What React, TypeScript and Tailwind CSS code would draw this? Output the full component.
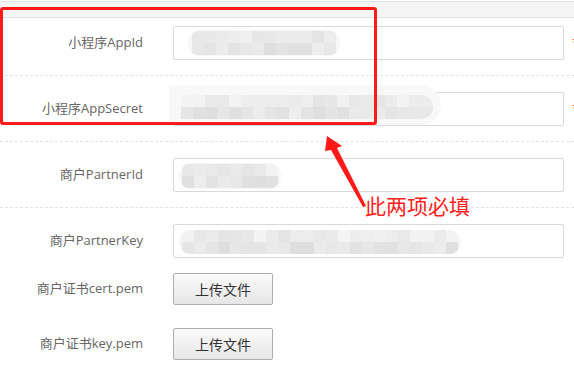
import React from "react";

const font = "font-['Open_Sans','Noto_Sans_CJK_SC',sans-serif]";

// deterministic grey for mosaic cells, lower rows a touch darker
const grey = (i: number, r: number, seed: number) => {
  const v = Math.abs(Math.sin(i * 12.9898 + seed * 78.233) * 43758.5453) % 1;
  const c = Math.round(236 - r * 6 + (v - 0.5) * 16);
  return `rgb(${c},${c},${c})`;
};

const Mosaic = ({ cols, rows, seed, cell = 12 }: { cols: number; rows: number; seed: number; cell?: number }) => (
  <div className="flex flex-col">
    {Array.from({ length: rows }).map((_, r) => (
      <div key={r} className="flex">
        {Array.from({ length: cols }).map((_, c) => (
          <div
            key={c}
            style={{ width: cell, height: cell, backgroundColor: grey(r * cols + c, r, seed) }}
          />
        ))}
      </div>
    ))}
  </div>
);

const Label = ({ children }: { children: React.ReactNode }) => (
  <div className="w-[143px] shrink-0 text-right text-[13px] text-[#666]">{children}</div>
);

const Input = ({ children }: { children?: React.ReactNode }) => (
  <div className="relative ml-[30px] h-[34px] w-[391px] shrink-0 rounded-[2px] border border-[#d9d9d9] bg-white">
    {children}
  </div>
);

const Star = () => <span className="ml-[8px] text-[12px] leading-none text-[#f0542d]">*</span>;

const UploadButton = () => (
  <button className="ml-[30px] h-[32px] w-[100px] rounded-[2px] border border-[#adadad] bg-gradient-to-b from-[#fbfbfb] to-[#e6e6e6] text-[14px] text-[#333]">
    上传文件
  </button>
);

export default function App() {
  return (
    <div className={`relative h-[381px] w-[574px] overflow-hidden bg-white ${font}`}>
      <div className="mt-px h-[17px] border-y border-[#e3e3e3] bg-[#f5f5f5]" />

      <div className="flex items-center border-b border-dashed border-[#e3e3e3] pt-[8px] pb-[15px]">
        <Label>小程序AppId</Label>
        <Input>
          <div className="absolute left-[14px] top-[3px] overflow-hidden rounded-full bg-[#f7f7f7] px-[4px] py-px">
            <Mosaic cols={12} rows={2} seed={1} />
          </div>
        </Input>
        <Star />
      </div>

      <div className="flex items-center border-b border-dashed border-[#e3e3e3] pt-[16px] pb-[15px]">
        <Label>小程序AppSecret</Label>
        <Input>
          <div className="absolute left-[-5px] top-[-8px] h-[40px] w-[272px] overflow-hidden rounded-r-full rounded-l-[14px] bg-[#f8f8f8] pl-[12px] pt-[10px]">
            <div className="w-[252px] overflow-hidden rounded-r-full">
              <Mosaic cols={21} rows={2} seed={2} />
            </div>
          </div>
        </Input>
        <Star />
      </div>

      <div className="flex items-center border-b border-dashed border-[#e3e3e3] pt-[16px] pb-[15px]">
        <Label>商户PartnerId</Label>
        <Input>
          <div className="absolute left-[5px] top-[4px] overflow-hidden rounded-full bg-[#f6f6f6] px-[3px] py-px">
            <Mosaic cols={8} rows={2} seed={3} />
          </div>
        </Input>
      </div>

      <div className="flex items-center pt-[16px] pb-[15px]">
        <Label>商户PartnerKey</Label>
        <Input>
          <div className="absolute left-[5px] top-[5px] overflow-hidden rounded-full bg-[#f6f6f6] px-[3px]">
            <Mosaic cols={23} rows={2} seed={4} />
          </div>
        </Input>
      </div>

      <div className="flex items-center pb-[23px]">
        <Label>商户证书cert.pem</Label>
        <UploadButton />
      </div>

      <div className="flex items-center">
        <Label>商户证书key.pem</Label>
        <UploadButton />
      </div>

      {/* annotation overlay */}
      <div className="pointer-events-none absolute left-0 top-[7px] h-[118px] w-[377px] rounded-[3px] border-[3px] border-[#ff1a1a]" />
      <svg className="pointer-events-none absolute left-0 top-0" width="574" height="381">
        <polygon
          points="327,136 342,146 337,148 366,206 363,207 331,150 325,151"
          fill="#ff1a1a"
        />
      </svg>
      <div className="pointer-events-none absolute left-[365px] top-[195px] font-['Noto_Sans_CJK_SC',sans-serif] text-[21px] leading-none text-[#ff2020]">
        此两项必填
      </div>
    </div>
  );
}
